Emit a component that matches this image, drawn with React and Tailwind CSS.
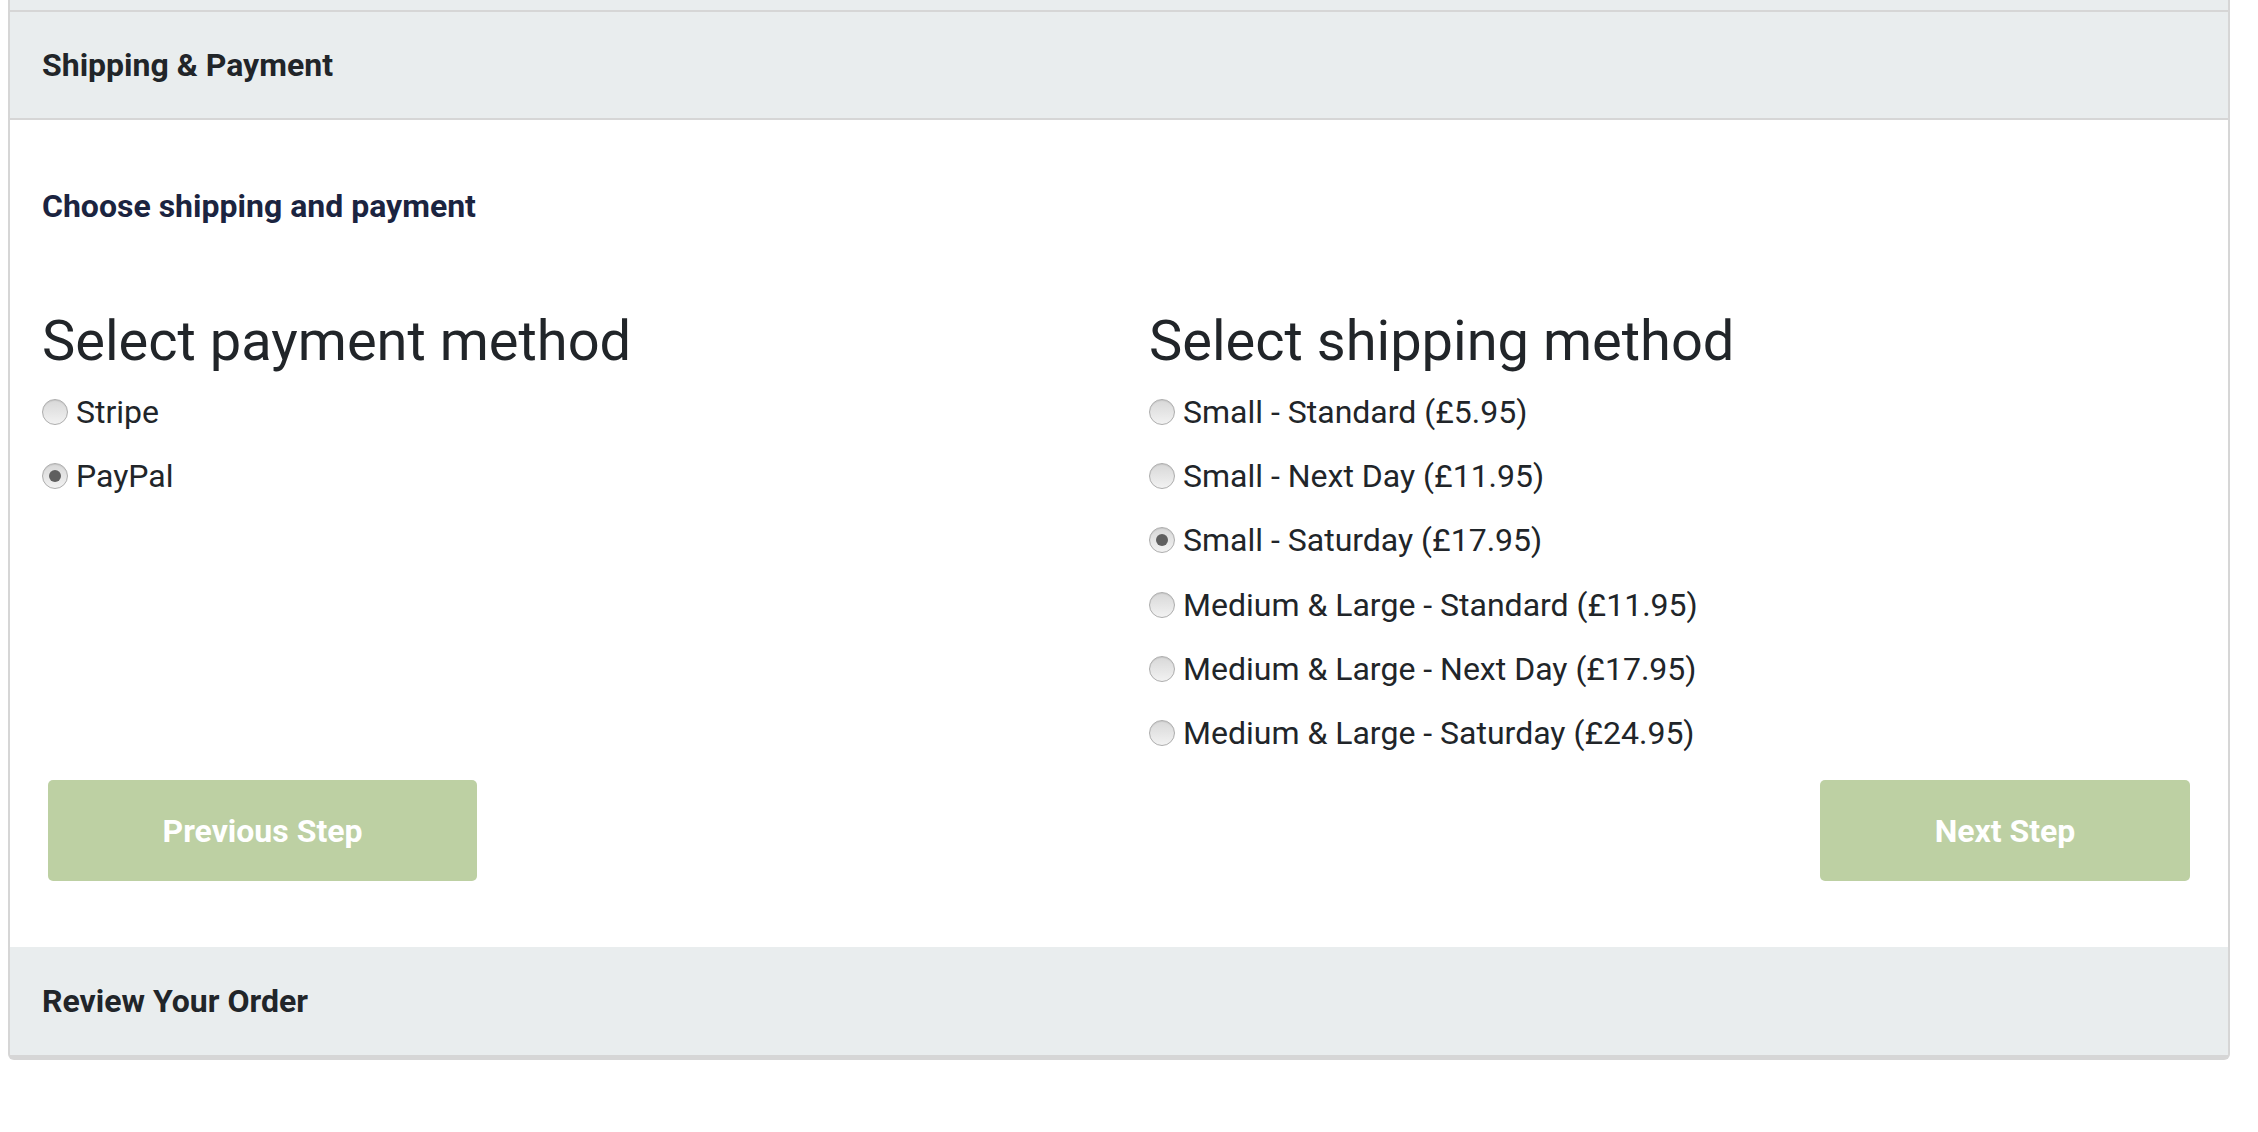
import React, { useState } from "react";

const paymentMethods = ["Stripe", "PayPal"];

const shippingMethods = [
  "Small - Standard (£5.95)",
  "Small - Next Day (£11.95)",
  "Small - Saturday (£17.95)",
  "Medium & Large - Standard (£11.95)",
  "Medium & Large - Next Day (£17.95)",
  "Medium & Large - Saturday (£24.95)",
];

function Radio({ label, checked, onSelect }) {
  return (
    <label className="flex items-center h-[64.2px] cursor-pointer" onClick={onSelect}>
      <span className="relative flex items-center justify-center w-[26px] h-[26px] rounded-full border border-[#adadad] bg-gradient-to-b from-[#d8d8d8] to-[#f2f2f2] shadow-[inset_0_1px_1px_rgba(0,0,0,0.08)]">
        {checked && <span className="w-[12px] h-[12px] rounded-full bg-[#5f5f5f]"></span>}
      </span>
      <span className="ml-[8px] text-[32px] text-[#212529]">{label}</span>
    </label>
  );
}

export default function App() {
  const [payment, setPayment] = useState("PayPal");
  const [shipping, setShipping] = useState("Small - Saturday (£17.95)");

  return (
    <div className="w-full h-[1132px] bg-white font-['Roboto',sans-serif]">
      <div className="ml-[8px] w-[2222px] border-x-2 border-b-[5px] border-[#d6d6d6] rounded-b-[6px] overflow-hidden">
        {/* previous section strip */}
        <div className="h-[12px] bg-[#e9edee] border-b-2 border-[#d6d6d6]"></div>

        {/* header */}
        <div className="h-[108px] bg-[#e9edee] border-b-2 border-[#d6d6d6] flex items-center pl-[32px]">
          <h4 className="text-[32px] font-bold text-[#212529]">Shipping &amp; Payment</h4>
        </div>

        {/* body */}
        <div className="bg-white px-[32px] pt-[64px] pb-[66px]">
          <h5 className="text-[32px] font-bold text-[#1b2440] leading-[44px]">Choose shipping and payment</h5>

          <div className="grid grid-cols-2 gap-x-[60px] mt-[82px]">
            <div>
              <h3 className="text-[56px] leading-[62px] text-[#212529] mb-[8px]">Select payment method</h3>
              {paymentMethods.map((method) => (
                <Radio
                  key={method}
                  label={method}
                  checked={payment === method}
                  onSelect={() => setPayment(method)}
                />
              ))}
            </div>
            <div>
              <h3 className="text-[56px] leading-[62px] text-[#212529] mb-[8px]">Select shipping method</h3>
              {shippingMethods.map((method) => (
                <Radio
                  key={method}
                  label={method}
                  checked={shipping === method}
                  onSelect={() => setShipping(method)}
                />
              ))}
            </div>
          </div>

          <div className="flex justify-between mt-[15px] pl-[6px] pr-[6px]">
            <button className="w-[429px] h-[101px] rounded-[5px] bg-[#bdd0a3] text-white text-[32px] font-bold">
              Previous Step
            </button>
            <button className="w-[370px] h-[101px] rounded-[5px] bg-[#bdd0a3] text-white text-[32px] font-bold">
              Next Step
            </button>
          </div>
        </div>

        {/* next section */}
        <div className="h-[108px] bg-[#e9edee] flex items-center pl-[32px]">
          <h4 className="text-[32px] font-bold text-[#212529]">Review Your Order</h4>
        </div>
      </div>
    </div>
  );
}
